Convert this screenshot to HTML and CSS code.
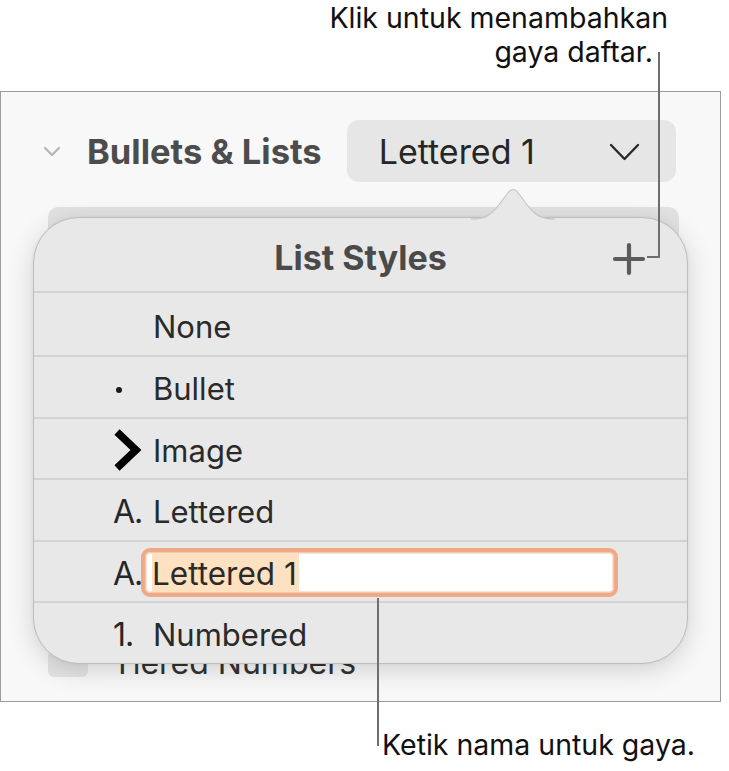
FILE: index.html
```html
<!DOCTYPE html>
<html lang="id">
<head>
<meta charset="utf-8">
<title>List Styles</title>
<link rel="stylesheet" href="styles.css">
</head>
<body>
<div class="page">
  <div class="note-top">
    <div class="note-line">Klik untuk menambahkan</div>
    <div class="note-line note-line2">gaya daftar.</div>
  </div>

  <div class="panel">
    <div class="section-head">
      <svg class="disclosure" width="18" height="12" viewBox="0 0 18 12"><path d="M2 2 L9 9 L16 2" fill="none" stroke="#b4b4b4" stroke-width="2.2" stroke-linecap="round" stroke-linejoin="round"/></svg>
      <span class="section-title">Bullets &amp; Lists</span>
      <div class="dropdown">
        <span class="dropdown-label">Lettered 1</span>
        <svg class="dropdown-chev" width="31" height="19" viewBox="0 0 31 19"><path d="M2 2 L15.5 16 L29 2" fill="none" stroke="#2a2a2a" stroke-width="2.4" stroke-linecap="round" stroke-linejoin="round"/></svg>
      </div>
    </div>
    <div class="style-box"></div>
    <div class="under-row">
      <span class="under-check"></span>
      <span class="under-text">Tiered Numbers</span>
    </div>
  </div>

  <div class="popover">
    <svg class="pop-arrow" width="84" height="34" viewBox="0 0 84 34"><path d="M0 33 C14 33 19 30 27 20 L36 8 C40 2 44 2 48 8 L57 20 C65 30 70 33 84 33 L84 34 L0 34 Z" fill="#e8e8e8"/><path d="M0 33 C14 33 19 30 27 20 L36 8 C40 2 44 2 48 8 L57 20 C65 30 70 33 84 33" fill="none" stroke="#c4c4c4" stroke-width="1.2"/></svg>
    <div class="pop-head">
      <span class="pop-title">List Styles</span>
      <svg class="pop-plus" width="34" height="34" viewBox="0 0 34 34"><path d="M17 3 V31 M3 17 H31" stroke="#5b5b5b" stroke-width="4.2" stroke-linecap="round"/></svg>
    </div>
    <div class="row row-first"><span class="marker"></span><span class="label">None</span></div>
    <div class="row"><span class="marker"><span class="dot"></span></span><span class="label">Bullet</span></div>
    <div class="row"><span class="marker"><svg width="30" height="42" viewBox="0 0 30 42"><path d="M4 3 L23 21 L4 39" fill="none" stroke="#000" stroke-width="7.5" stroke-linejoin="miter"/></svg></span><span class="label">Image</span></div>
    <div class="row"><span class="marker mk-text">A.</span><span class="label">Lettered</span></div>
    <div class="row row-edit"><span class="marker mk-text">A.</span><div class="edit-field"><span class="sel">Lettered 1</span></div></div>
    <div class="row row-last"><span class="marker mk-text">1.</span><span class="label">Numbered</span></div>
  </div>

  <div class="lead lead-top-v"></div>
  <div class="lead lead-top-h"></div>
  <div class="lead lead-bottom-v"></div>

  <div class="note-bottom">Ketik nama untuk gaya.</div>
</div>
</body>
</html>
```

FILE: styles.css
```css
* { box-sizing: border-box; }
html, body { margin: 0; padding: 0; background: #fff; }
body { font-family: "Inter", "Noto Sans", "Liberation Sans", sans-serif; color: #1e1e1e; }

.page { position: relative; width: 729px; height: 771px; overflow: hidden; }

.note-top {
  height: 91px;
  padding-top: 1px;
  display: flex;
  flex-direction: column;
  align-items: flex-end;
  width: 668px;
  font-size: 28.5px;
  line-height: 34px;
  color: #111;
}
.note-line2 { margin-right: 15px; }

.panel {
  width: 721px;
  height: 611px;
  border: 1.5px solid #9b9b9b;
  background: #f8f8f8;
  padding: 28px 0 0 0;
}

.section-head {
  display: flex;
  align-items: center;
  height: 62px;
}
.disclosure { margin-left: 42px; margin-top: 2px; }
.section-title {
  margin-left: 26px;
  font-size: 34.5px;
  font-weight: 700;
  color: #4c4c4c;
}
.dropdown {
  margin-left: 25px;
  width: 329px;
  height: 62px;
  border-radius: 12px;
  background: #e6e6e6;
  display: flex;
  align-items: center;
  padding-left: 32px;
  padding-right: 36px;
}
.dropdown-label { font-size: 34px; color: #262626; flex: 1; }
.dropdown-chev { margin-top: 2px; }

.style-box {
  margin: 25px 0 0 47px;
  width: 631px;
  height: 60px;
  border-radius: 10px;
  background: #e2e2e2;
}

.under-row {
  margin-top: 381px;
  display: flex;
  align-items: center;
  height: 30px;
}
.under-check {
  margin-left: 47px;
  width: 40px;
  height: 27px;
  border-radius: 6px;
  background: #e4e4e4;
}
.under-text {
  margin-left: 24px;
  font-size: 32px;
  color: #333;
  line-height: 30px;
}

.popover {
  position: absolute;
  left: 33px;
  top: 217px;
  width: 655px;
  height: 447px;
  background: #e8e8e8;
  border: 1px solid #bdbdbd;
  border-radius: 46px;
  box-shadow: 0 6px 26px rgba(0,0,0,0.16), 0 0 3px rgba(0,0,0,0.06);
}
.pop-arrow { position: absolute; left: 437px; top: -32px; }

.pop-head {
  position: relative;
  height: 75px;
  display: flex;
  align-items: center;
  justify-content: center;
  border-bottom: 2px solid #d3d3d3;
}
.pop-title { font-size: 34px; font-weight: 700; color: #4a4a4a; margin-top: 6px; }
.pop-plus { position: absolute; right: 41px; top: 24px; }

.row {
  height: 61.5px;
  display: flex;
  align-items: center;
  border-bottom: 2px solid #d3d3d3;
  padding-top: 4px;
}
.row-first { height: 64px; }
.row-last { border-bottom: none; height: 59px; }
.marker {
  width: 119px;
  padding-left: 79px;
  display: flex;
  align-items: center;
}
.mk-text { font-size: 32px; color: #262626; letter-spacing: -1px; }
.dot { width: 6px; height: 6px; border-radius: 50%; background: #1a1a1a; margin-left: 3px; margin-top: 2px; }
.label { font-size: 31px; color: #2a2a2a; }

.row-edit { position: relative; }
.edit-field {
  position: absolute;
  left: 107px;
  top: 6px;
  width: 477px;
  height: 49px;
  border: 4px solid #eeaa86;
  border-radius: 9px;
  background: #fff;
  box-shadow: inset 0 0 0 1.5px #f6c9ae;
  padding: 0 0 0 7px;
  display: flex;
  align-items: stretch;
}
.sel {
  display: flex;
  align-items: center;
  font-size: 31.5px;
  background: #fde1c0;
  color: #2a2a2a;
  padding: 2px 2px 0 0;
  margin: 1px 0;
}

.lead { position: absolute; background: #6e6e6e; }
.lead-top-v { left: 658px; top: 52px; width: 2px; height: 206px; }
.lead-top-h { left: 647px; top: 256px; width: 13px; height: 2px; }
.lead-bottom-v { left: 377px; top: 598px; width: 2px; height: 148px; }

.note-bottom {
  position: absolute;
  left: 382px;
  top: 727px;
  font-size: 28.5px;
  line-height: 36px;
  color: #111;
}
```
